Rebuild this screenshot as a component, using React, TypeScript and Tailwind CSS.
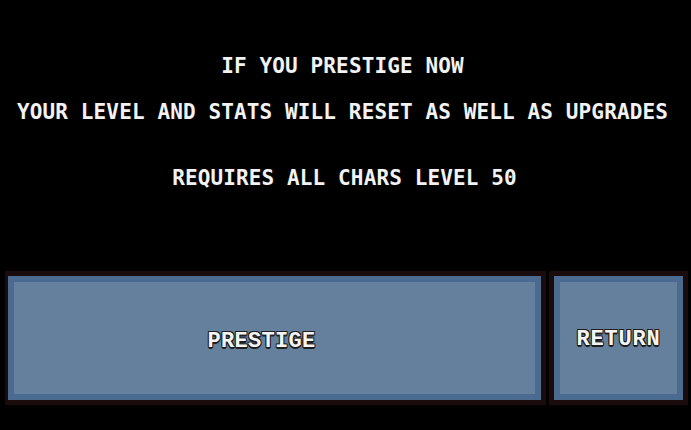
export default function App() {
  const outline =
    "[text-shadow:-1px_-1px_0_#1e1e1e,1px_-1px_0_#1e1e1e,-1px_1px_0_#1e1e1e,1px_1px_0_#1e1e1e,0_2px_0_#1e1e1e]";

  return (
    <div className="w-[691px] h-[430px] bg-black flex flex-col overflow-hidden">
      {/* Texto de aviso */}
      <div className="flex flex-col items-center pt-[54px] font-['DejaVu_Sans_Mono',monospace] font-bold text-[21px] tracking-[0.12px] leading-[24px] text-[#f2f2f2] whitespace-nowrap">
        <div className="h-[24px] pr-[6px]">IF YOU PRESTIGE NOW</div>
        <div className="h-[24px] mt-[22px] pr-[6px]">YOUR LEVEL AND STATS WILL RESET AS WELL AS UPGRADES</div>
        <div className="h-[24px] mt-[42px] pr-[2px]">REQUIRES ALL CHARS LEVEL 50</div>
      </div>

      {/* Botoes */}
      <div className="flex gap-[3px] mt-[81px] pl-[5px] pr-[3px] h-[134px]">
        <div className="flex-1 border-[3px] border-t-[5px] border-b-[5px] border-r-[5px] border-[#1a0b0c] flex">
          <div className="flex-1 border-[6px] border-[#4a6b8f] bg-[#64809d] flex items-center justify-center pr-[26px] pt-[6px]">
            <span className={`font-['Liberation_Mono',monospace] font-bold text-[22px] tracking-[0.3px] text-[#f4f4f4] ${outline}`}>
              PRESTIGE
            </span>
          </div>
        </div>
        <div className="w-[139px] border-[5px] border-[#1a0b0c] flex">
          <div className="flex-1 border-[6px] border-[#4a6b8f] bg-[#64809d] flex items-center justify-center pt-[2px]">
            <span className={`font-['Liberation_Mono',monospace] font-bold text-[22px] tracking-[0.8px] text-[#f4f4f4] ${outline}`}>
              RETURN
            </span>
          </div>
        </div>
      </div>
    </div>
  );
}
